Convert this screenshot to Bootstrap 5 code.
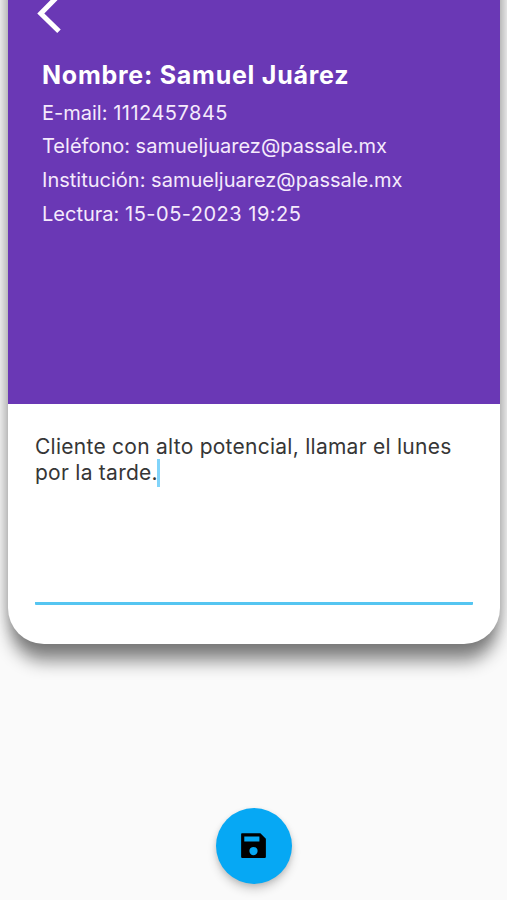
<!DOCTYPE html>
<html lang="es">
<head>
<meta charset="utf-8">
<meta name="viewport" content="width=device-width, initial-scale=1">
<title>Contacto</title>
<link href="https://cdn.jsdelivr.net/npm/bootstrap@5.3.0/dist/css/bootstrap.min.css" rel="stylesheet">
<style>
  body { background: #fafafa; font-family: Inter, "Liberation Sans", sans-serif; }
  .screen { height: 900px; }
  .contact { width: 492px; height: 704px; margin: -60px 0 0 8px; border-radius: 0 0 36px 36px; box-shadow: 0 20px 17px -3px rgba(0,0,0,.46), 0 0 14px 2px rgba(0,0,0,.18); }
  .contact-head { height: 464px; background: #6a38b5; padding: 60px 0 0 34px; }
  .back { width: 26px; height: 34px; margin-left: -5px; }
  .contact-name { font-size: 25px; line-height: 34px; margin-top: 24px; letter-spacing: .75px; }
  .contact-line { font-size: 20px; line-height: 33.7px; color: #f5eafc; letter-spacing: .01px; margin-top: 4.6px; }
  .digits { letter-spacing: .5px; }
  .note { margin: 0 27px; height: 201px; padding-top: 30px; border-bottom: 3px solid #55c5f1; border-radius: 1px; font-size: 21px; line-height: 25.5px; letter-spacing: .26px; color: #363636; }
  .caret { width: 3px; height: 28px; margin: -6px 0 -6px -1px; background: #81d4fa; vertical-align: -1px; }
  .save { width: 76px; height: 76px; margin: 164px 0 0 216px; background: #06a8f4; box-shadow: 0 6px 10px rgba(0,0,0,.16), 0 2px 5px rgba(0,0,0,.12); }
  .save svg { margin: -1px 1px 0 0; }
</style>
</head>
<body>
<main class="screen overflow-hidden">
  <section class="contact bg-white overflow-hidden">
    <header class="contact-head text-white">
      <svg class="back d-block" viewBox="0 0 26 34" fill="none" stroke="#fff" stroke-width="5"><path d="M22 -5 3.8 13.5 22 31.2"/></svg>
      <h1 class="contact-name fw-bold mb-0 text-nowrap">Nombre: Samuel Juárez</h1>
      <div class="contact-line text-nowrap">
        <div>E-mail: <span class="digits">1112457845</span></div>
        <div>Teléfono: samueljuarez@passale.mx</div>
        <div>Institución: samueljuarez@passale.mx</div>
        <div>Lectura: <span class="digits">15-05-2023 19:25</span></div>
      </div>
    </header>
    <div class="note text-nowrap">Cliente con alto potencial, llamar el lunes<br>por la tarde.<span class="caret d-inline-block"></span></div>
  </section>
  <button type="button" class="save btn border-0 rounded-circle p-0 d-flex align-items-center justify-content-center" aria-label="Guardar">
    <svg width="33" height="33" viewBox="0 0 24 24" fill="#000"><path d="M17 3H3.6Q3 3 3 3.6v16.8q0 .6.6.6h16.8q.6 0 .6-.6V7l-4-4zm-5 16a3 3 0 1 1 0-6 3 3 0 0 1 0 6zm4.3-10H5.3V5.5h11v3.5z"/></svg>
  </button>
</main>
<script src="https://cdn.jsdelivr.net/npm/bootstrap@5.3.0/dist/js/bootstrap.bundle.min.js"></script>
</body>
</html>
